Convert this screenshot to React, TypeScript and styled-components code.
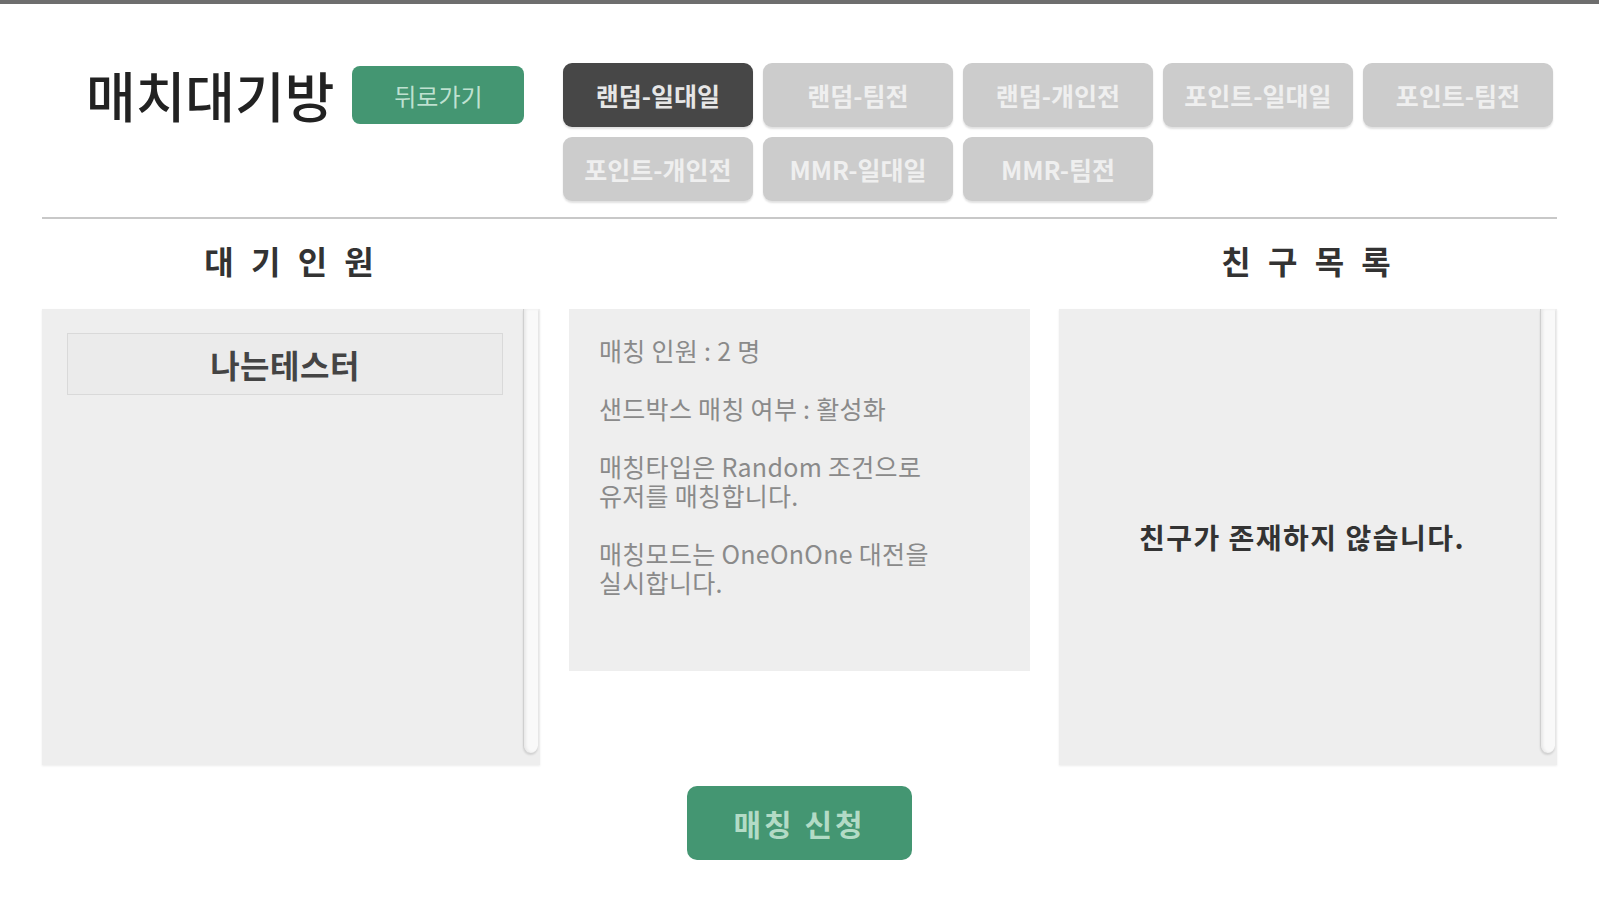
import React from "react";
import styled, { createGlobalStyle } from "styled-components";

const GlobalStyle = createGlobalStyle`
  html, body {
    margin: 0;
    padding: 0;
    background: #ffffff;
    font-family: "Noto Sans CJK KR", "Noto Sans", sans-serif;
  }
  * { box-sizing: border-box; }
`;

const Page = styled.div`
  min-height: 900px;
  border-top: 4px solid #6e6e6e;
`;

const Container = styled.div`
  width: 1515px;
  margin: 0 auto;
  padding-top: 59px;
`;

const Header = styled.header`
  display: flex;
  align-items: flex-start;
  padding-bottom: 16px;
  border-bottom: 2px solid #c8c8c8;
`;

const TitleGroup = styled.div`
  display: flex;
  align-items: center;
  gap: 18px;
  height: 64px;
  margin-left: 44px;
`;

const Title = styled.h1`
  margin: 0;
  font-size: 54px;
  font-weight: 500;
  letter-spacing: 0;
  color: #222;
  line-height: 64px;
`;

const BackButton = styled.button`
  width: 172px;
  height: 58px;
  border: none;
  border-radius: 8px;
  background: #449672;
  color: rgba(214, 240, 226, 0.85);
  font-family: inherit;
  font-size: 24px;
  font-weight: 400;
  letter-spacing: 0;
  cursor: pointer;
`;

const Tabs = styled.div`
  margin-left: auto;
  margin-right: 4px;
  display: grid;
  grid-template-columns: repeat(5, 190px);
  column-gap: 10px;
  row-gap: 10px;
`;

const Tab = styled.button<{ $active?: boolean }>`
  height: 64px;
  border: none;
  border-radius: 9px;
  background: ${(p) => (p.$active ? "#474747" : "#cccccc")};
  color: ${(p) => (p.$active ? "#e6e6e6" : "#efefef")};
  box-shadow: 0 2px 2px rgba(0, 0, 0, 0.12);
  font-family: inherit;
  font-size: 25px;
  font-weight: 700;
  letter-spacing: 0;
  cursor: pointer;
`;

const Columns = styled.div`
  display: grid;
  grid-template-columns: 498px 461px 498px;
  column-gap: 29px;
  align-items: start;
`;

const Column = styled.section`
  display: flex;
  flex-direction: column;
`;

const Heading = styled.h2`
  margin: 21px 0 29px;
  height: 40px;
  line-height: 40px;
  text-align: center;
  font-size: 32px;
  font-weight: 700;
  letter-spacing: 4px;
  word-spacing: 2px;
  color: #333;
`;

const Spacer = styled.div`
  height: 90px;
`;

const ListPanel = styled.div`
  height: 456px;
  background: #eeeeee;
  box-shadow: 0 1px 2px rgba(0, 0, 0, 0.08);
  display: flex;
`;

const ListBody = styled.div<{ $center?: boolean }>`
  flex: 1;
  padding: 24px 20px 24px 25px;
  display: flex;
  flex-direction: column;
  ${(p) => (p.$center ? `align-items: center; justify-content: center;` : ``)}
`;

const ScrollTrack = styled.div`
  width: 15px;
  margin: 0 2px 12px 0;
  background: #f9f9f9;
  border-left: 1px solid #cfcfcf;
  border-radius: 0 0 8px 8px;
  box-shadow: inset 2px 0 3px rgba(0, 0, 0, 0.07), 0 2px 2px rgba(0, 0, 0, 0.12);
`;

const UserItem = styled.div`
  height: 62px;
  border: 1px solid #d9d9d9;
  background: #ebebeb;
  display: flex;
  align-items: center;
  justify-content: center;
  font-size: 32px;
  font-weight: 600;
  color: #444;
  letter-spacing: 0.5px;
`;

const InfoPanel = styled.div`
  height: 362px;
  background: #eeeeee;
  padding: 27px 30px;
  display: flex;
  flex-direction: column;
  gap: 29px;
`;

const InfoText = styled.p`
  margin: 0;
  font-size: 25px;
  line-height: 29px;
  color: #8a8a8a;
  letter-spacing: 0.3px;
  white-space: pre-line;
`;

const EmptyText = styled.p`
  margin: 0;
  font-size: 28px;
  font-weight: 700;
  color: #333;
  letter-spacing: 1.5px;
`;

const Footer = styled.div`
  display: flex;
  justify-content: center;
  padding-top: 21px;
`;

const MatchButton = styled.button`
  width: 225px;
  height: 74px;
  border: none;
  border-radius: 10px;
  background: #449672;
  color: rgba(200, 232, 214, 0.85);
  font-family: inherit;
  font-size: 30px;
  font-weight: 700;
  letter-spacing: 3px;
  cursor: pointer;
`;

const tabs = [
  "랜덤-일대일",
  "랜덤-팀전",
  "랜덤-개인전",
  "포인트-일대일",
  "포인트-팀전",
  "포인트-개인전",
  "MMR-일대일",
  "MMR-팀전",
];

const info = [
  "매칭 인원 : 2 명",
  "샌드박스 매칭 여부 : 활성화",
  "매칭타입은 Random 조건으로\n유저를 매칭합니다.",
  "매칭모드는 OneOnOne 대전을\n실시합니다.",
];

export default function App() {
  return (
    <Page>
      <GlobalStyle />
      <Container>
        <Header>
          <TitleGroup>
            <Title>매치대기방</Title>
            <BackButton>뒤로가기</BackButton>
          </TitleGroup>
          <Tabs>
            {tabs.map((t, i) => (
              <Tab key={t} $active={i === 0}>
                {t}
              </Tab>
            ))}
          </Tabs>
        </Header>
        <Columns>
          <Column>
            <Heading>대 기 인 원</Heading>
            <ListPanel>
              <ListBody>
                <UserItem>나는테스터</UserItem>
              </ListBody>
              <ScrollTrack />
            </ListPanel>
          </Column>
          <Column>
            <Spacer />
            <InfoPanel>
              {info.map((s) => (
                <InfoText key={s}>{s}</InfoText>
              ))}
            </InfoPanel>
          </Column>
          <Column>
            <Heading>친 구 목 록</Heading>
            <ListPanel>
              <ListBody $center>
                <EmptyText>친구가 존재하지 않습니다.</EmptyText>
              </ListBody>
              <ScrollTrack />
            </ListPanel>
          </Column>
        </Columns>
        <Footer>
          <MatchButton>매칭 신청</MatchButton>
        </Footer>
      </Container>
    </Page>
  );
}
